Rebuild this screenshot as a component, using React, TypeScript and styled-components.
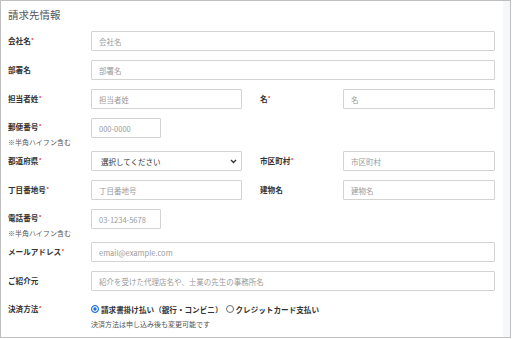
import React from "react";
import styled, { createGlobalStyle } from "styled-components";

const Global = createGlobalStyle`
  html, body { margin: 0; padding: 0; background: #fff; }
  body { font-family: "Noto Sans CJK JP", "Noto Sans", sans-serif; color: #333; }
  * { box-sizing: border-box; }
`;

const Frame = styled.div`
  width: 511px;
  height: 338px;
  border: 1px solid #bfbfbf;
  display: flex;
  overflow: hidden;
`;

const Content = styled.div`
  flex: 1;
  padding: 7px 8px 0 7px;
  display: flex;
  flex-direction: column;
  gap: 9px;
`;

const ScrollTrack = styled.div`
  width: 7px;
  background: #f6f7f9;
`;

const Title = styled.h2`
  margin: 0;
  font-size: 10.5px;
  line-height: 14px;
  font-weight: 400;
  color: #555;
`;

const FullRow = styled.div<{ $top?: boolean }>`
  display: grid;
  grid-template-columns: 83px 1fr;
  align-items: ${(p) => (p.$top ? "start" : "center")};
`;

const HalfRow = styled.div`
  display: grid;
  grid-template-columns: 234px 235px;
  column-gap: 18px;
`;

const Field = styled.div`
  display: grid;
  grid-template-columns: 83px 1fr;
  align-items: center;
`;

const LabelBlock = styled.div<{ $note?: boolean }>`
  display: flex;
  flex-direction: column;
  margin-bottom: ${(p) => (p.$note ? "-6px" : "0")};
`;

const Label = styled.span`
  font-size: 7.6px;
  line-height: 18px;
  font-weight: 700;
  color: #333;
  white-space: nowrap;
`;

const Req = styled.span`
  color: #e5323a;
  font-family: "Liberation Sans", sans-serif;
  font-size: 6px;
  line-height: 0;
  vertical-align: 2px;
  margin-left: 0.5px;
`;

const Note = styled.span`
  font-size: 7px;
  line-height: 12px;
  color: #555;
  white-space: nowrap;
`;

const Input = styled.input<{ $w?: number }>`
  width: ${(p) => (p.$w ? `${p.$w}px` : "100%")};
  height: 20px;
  border: 1px solid #d3d3d3;
  border-radius: 1px;
  padding: 0 7px;
  font-family: inherit;
  font-size: 7.5px;
  color: #333;
  background: #fff;
  outline: none;
  &::placeholder { color: #9a9a9a; }
`;

const Select = styled.div`
  height: 20px;
  border: 1px solid #d3d3d3;
  border-radius: 1px;
  padding: 0 4px 0 9px;
  display: flex;
  align-items: center;
  justify-content: space-between;
  font-size: 7.5px;
  color: #333;
  background: #fff;
`;

const Options = styled.div`
  display: flex;
  flex-direction: column;
`;

const OptionLine = styled.div`
  display: flex;
  align-items: center;
  height: 18px;
  gap: 3px;
`;

const Option = styled.label`
  display: flex;
  align-items: center;
  gap: 2px;
  font-size: 7.6px;
  font-weight: 700;
  color: #333;
  white-space: nowrap;
`;

const Radio = styled.span<{ $checked?: boolean }>`
  width: 8px;
  height: 8px;
  border-radius: 50%;
  border: 1px solid ${(p) => (p.$checked ? "#1a6fe6" : "#6f6f6f")};
  background: ${(p) => (p.$checked ? "#1a6fe6" : "#fff")};
  box-shadow: ${(p) => (p.$checked ? "inset 0 0 0 1.3px #fff" : "none")};
  flex: none;
`;

const Chevron = () => (
  <svg width="7" height="5" viewBox="0 0 7 5">
    <path d="M1 1 L3.5 3.5 L6 1" fill="none" stroke="#333" strokeWidth="1.4" />
  </svg>
);

const L = ({ text, req }: { text: string; req?: boolean }) => (
  <Label>
    {text}
    {req && <Req>*</Req>}
  </Label>
);

export default function App() {
  return (
    <>
      <Global />
      <Frame>
        <Content>
          <Title>請求先情報</Title>
          <FullRow>
            <L text="会社名" req />
            <Input placeholder="会社名" readOnly />
          </FullRow>
          <FullRow>
            <L text="部署名" />
            <Input placeholder="部署名" readOnly />
          </FullRow>
          <HalfRow>
            <Field>
              <L text="担当者姓" req />
              <Input placeholder="担当者姓" readOnly />
            </Field>
            <Field>
              <L text="名" req />
              <Input placeholder="名" readOnly />
            </Field>
          </HalfRow>
          <FullRow $top>
            <LabelBlock $note>
              <L text="郵便番号" req />
              <Note>※半角ハイフン含む</Note>
            </LabelBlock>
            <Input $w={70} placeholder="000-0000" readOnly />
          </FullRow>
          <HalfRow>
            <Field>
              <L text="都道府県" req />
              <Select>
                <span>選択してください</span>
                <Chevron />
              </Select>
            </Field>
            <Field>
              <L text="市区町村" req />
              <Input placeholder="市区町村" readOnly />
            </Field>
          </HalfRow>
          <HalfRow>
            <Field>
              <L text="丁目番地号" req />
              <Input placeholder="丁目番地号" readOnly />
            </Field>
            <Field>
              <L text="建物名" />
              <Input placeholder="建物名" readOnly />
            </Field>
          </HalfRow>
          <FullRow $top>
            <LabelBlock $note>
              <L text="電話番号" req />
              <Note>※半角ハイフン含む</Note>
            </LabelBlock>
            <Input $w={70} placeholder="03-1234-5678" readOnly />
          </FullRow>
          <FullRow>
            <L text="メールアドレス" req />
            <Input placeholder="email@example.com" readOnly />
          </FullRow>
          <FullRow>
            <L text="ご紹介元" />
            <Input placeholder="紹介を受けた代理店名や、士業の先生の事務所名" readOnly />
          </FullRow>
          <FullRow $top>
            <L text="決済方法" req />
            <Options>
              <OptionLine>
                <Option>
                  <Radio $checked />
                  請求書掛け払い（銀行・コンビニ）
                </Option>
                <Option>
                  <Radio />
                  クレジットカード支払い
                </Option>
              </OptionLine>
              <Note>決済方法は申し込み後も変更可能です</Note>
            </Options>
          </FullRow>
        </Content>
        <ScrollTrack />
      </Frame>
    </>
  );
}
